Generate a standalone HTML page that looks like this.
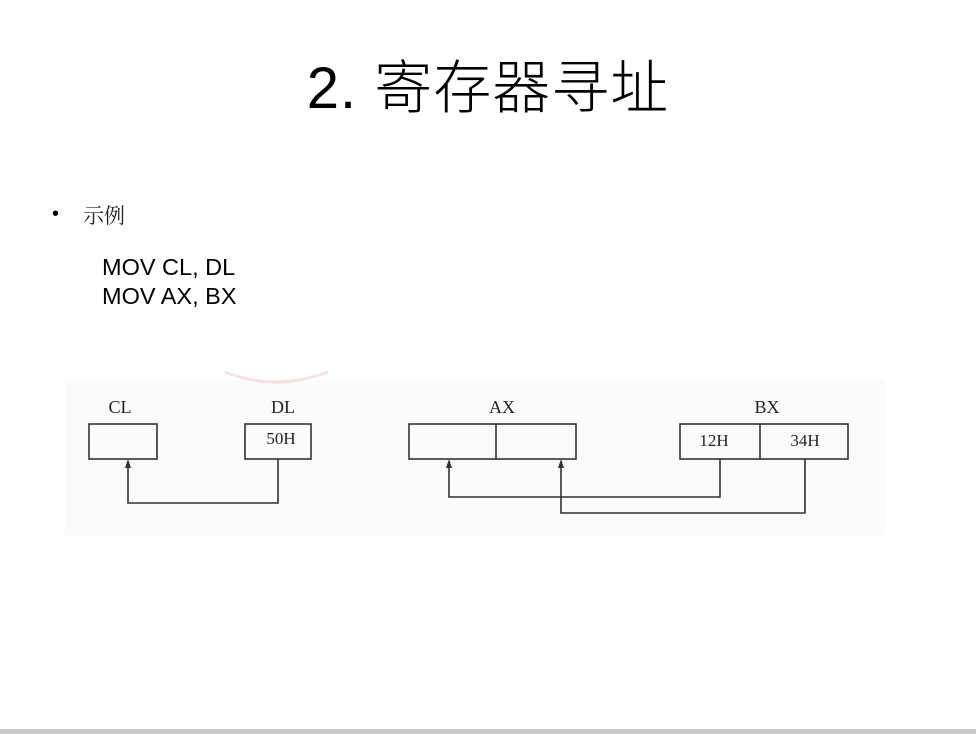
<!DOCTYPE html>
<html><head><meta charset="utf-8"><style>
html,body{margin:0;padding:0;background:#fff;}
body{width:976px;height:734px;position:relative;overflow:hidden;font-family:"Liberation Sans","Noto Sans CJK SC",sans-serif;}
.t{position:absolute;left:0;width:976px;top:54px;text-align:center;font-size:58px;color:#000;line-height:70px;font-weight:300;letter-spacing:1px;}
.b{position:absolute;left:52px;top:203px;font-size:20px;}
.s{position:absolute;left:83px;top:200px;font-family:"Noto Serif CJK SC",serif;font-size:21px;color:#222;}
.m{position:absolute;left:102px;top:253px;font-size:23.5px;line-height:29px;color:#000;}
.bar{position:absolute;left:0;top:729px;width:976px;height:5px;background:#c9c9cc;}
</style></head><body>
<div class="t">2. 寄存器寻址</div>
<div class="b">•</div>
<div class="s">示例</div>
<div class="m">MOV CL, DL<br>MOV AX, BX</div>
<svg style="position:absolute;left:0;top:0" width="976" height="734">
<rect x="65" y="380" width="820" height="155" fill="#fbfbfb"/>
<path d="M225 372 Q275 392 328 372" stroke="#f6e2e2" stroke-width="3" fill="none"/>
<g font-family="Liberation Serif,serif" font-size="18" fill="#222" text-anchor="middle">
<text x="120" y="413">CL</text><text x="283" y="413">DL</text>
<text x="502" y="413">AX</text><text x="767" y="413">BX</text>
<text x="281" y="444" font-size="17">50H</text>
<text x="714" y="446" font-size="17">12H</text>
<text x="805" y="446" font-size="17">34H</text>
</g>
<g stroke="#333" stroke-width="1.6" fill="none">
<rect x="89" y="424" width="68" height="35"/>
<rect x="245" y="424" width="66" height="35"/>
<rect x="409" y="424" width="167" height="35"/><line x1="496" y1="424" x2="496" y2="459"/>
<rect x="680" y="424" width="168" height="35"/><line x1="760" y1="424" x2="760" y2="459"/>
<path d="M278 459V503H128V464"/>
<path d="M720 459V497H449V464"/>
<path d="M805 459V513H561V464"/>
</g>
<g fill="#333">
<path d="M128 459l-3 9h6z"/><path d="M449 459l-3 9h6z"/><path d="M561 459l-3 9h6z"/>
</g>
</svg>
<div class="bar"></div>
</body></html>
